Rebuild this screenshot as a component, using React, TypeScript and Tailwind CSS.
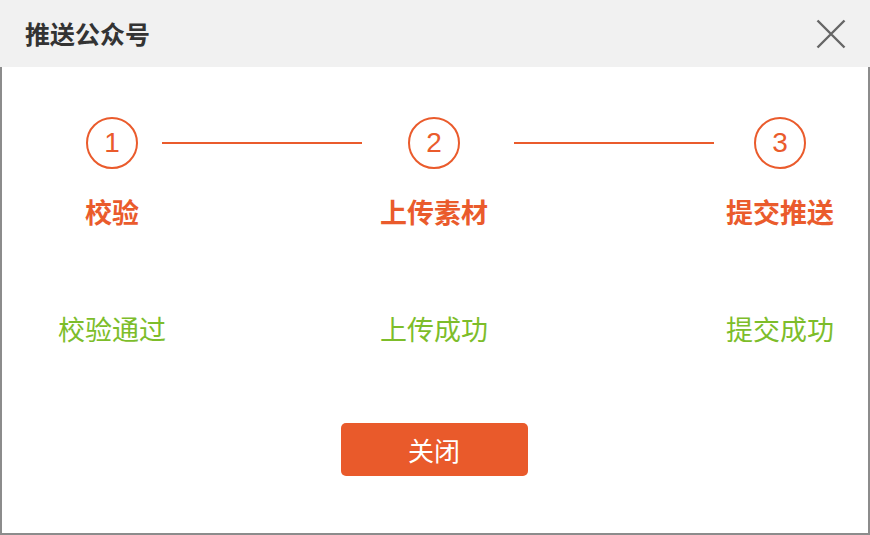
const ORANGE = "text-[#ea5b2c]";

const steps = [
  { n: "1", label: "校验", status: "校验通过" },
  { n: "2", label: "上传素材", status: "上传成功" },
  { n: "3", label: "提交推送", status: "提交成功" },
];

function Step({ n, label, status }: { n: string; label: string; status: string }) {
  return (
    <div className="flex w-[52px] flex-col items-center">
      <div
        className={`flex h-[52px] w-[52px] shrink-0 items-center justify-center rounded-full border-2 border-[#ea5b2c] ${ORANGE} font-['Liberation_Sans',sans-serif] text-[28px] leading-none`}
      >
        {n}
      </div>
      <div className={`mt-[27px] whitespace-nowrap text-[27px] font-bold leading-[31px] ${ORANGE}`}>{label}</div>
      <div className="mt-[86px] whitespace-nowrap text-[27px] leading-[31px] text-[#7dbd2a]">{status}</div>
    </div>
  );
}

function Line({ ml }: { ml: string }) {
  return <div className={`mt-[25px] h-[2px] w-[200px] shrink-0 bg-[#ea5b2c] ${ml}`} />;
}

export default function App() {
  return (
    <div className="flex h-[535px] w-[870px] flex-col bg-white font-['Noto_Sans_CJK_SC','Noto_Sans',sans-serif]">
      {/* Header */}
      <div className="flex h-[67px] shrink-0 items-center justify-between bg-[#f1f1f1] pl-[25px] pr-[24px]">
        <span className="text-[25px] font-bold text-[#333333]">推送公众号</span>
        <svg width="30" height="30" viewBox="0 0 30 30" className="text-[#666666]">
          <path d="M1.5 1.5 L28.5 28.5 M28.5 1.5 L1.5 28.5" stroke="currentColor" strokeWidth="2.4" fill="none" />
        </svg>
      </div>

      {/* Body */}
      <div className="flex flex-1 flex-col border-x-2 border-b-2 border-[#8c8c8c]">
        <div className="flex items-start pl-[84px] pt-[50px]">
          <Step {...steps[0]} />
          <Line ml="ml-[24px]" />
          <div className="ml-[46px]">
            <Step {...steps[1]} />
          </div>
          <Line ml="ml-[54px]" />
          <div className="ml-[40px]">
            <Step {...steps[2]} />
          </div>
        </div>

        <div className="mt-[79px] flex justify-center pr-[2px]">
          <button className="flex h-[53px] w-[187px] items-center justify-center rounded-[5px] bg-[#e95a2b] text-[26px] text-white">
            关闭
          </button>
        </div>
      </div>
    </div>
  );
}
